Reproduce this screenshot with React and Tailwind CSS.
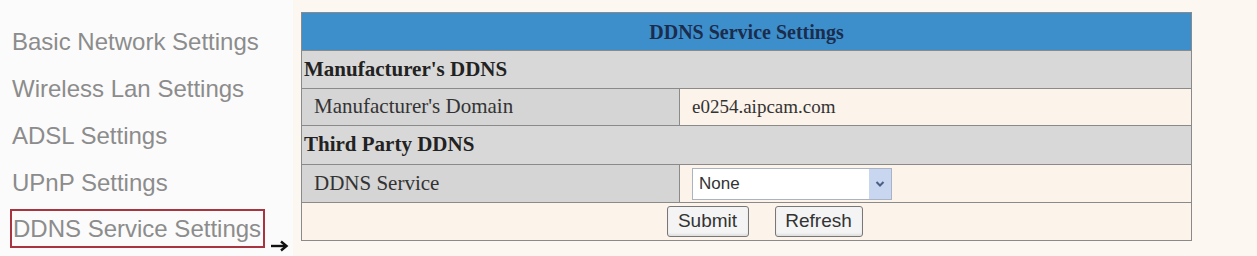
export default function App() {
  const menu = [
    "Basic Network Settings",
    "Wireless Lan Settings",
    "ADSL Settings",
    "UPnP Settings",
  ];

  return (
    <div className="flex w-[1257px] h-[256px] bg-[#fdf7f2] overflow-hidden">
      {/* left menu */}
      <div className="w-[293px] h-full bg-[#fbfbfb] pt-[18px] font-['Liberation_Sans',Arial,sans-serif] text-[24px] text-[#8c8c8c]">
        {menu.map((m) => (
          <div key={m} className="h-[47px] flex items-center pl-[12px]">
            {m}
          </div>
        ))}
        <div className="flex items-end mt-[3px]">
          <div className="ml-[10px] h-[39px] w-[255px] border-2 border-[#a8343f] flex items-center pl-[1px] whitespace-nowrap">
            DDNS Service Settings
          </div>
          <svg className="ml-[5px] -mb-[4px]" width="19" height="12" viewBox="0 0 19 12">
            <path d="M1 6 H15" stroke="#111" strokeWidth="2.4" />
            <path d="M11 1.5 L16.5 6 L11 10.5" fill="none" stroke="#111" strokeWidth="2.4" />
          </svg>
        </div>
      </div>

      {/* content */}
      <div className="flex-1 pt-[12px] pl-[8px]">
        <table className="w-[891px] border-collapse border border-[#8a8a8a] font-['Liberation_Serif','Times_New_Roman',serif] text-[21px] text-[#333]">
          <tbody>
            <tr className="h-[38px] bg-[#3d8fcc]">
              <td colSpan={2} className="text-center font-bold text-[20px] text-[#1b2c4c]">
                DDNS Service Settings
              </td>
            </tr>
            <tr className="h-[38px] bg-[#d8d8d8] border-t border-[#8a8a8a]">
              <td colSpan={2} className="font-bold text-[#222] pl-[2px]">
                Manufacturer's DDNS
              </td>
            </tr>
            <tr className="h-[37px] border-t border-[#8a8a8a]">
              <td className="w-[378px] bg-[#d5d5d5] pl-[12px] border-r border-[#8a8a8a]">
                Manufacturer's Domain
              </td>
              <td className="bg-[#fcf3eb] pl-[12px] text-[19px]">e0254.aipcam.com</td>
            </tr>
            <tr className="h-[39px] bg-[#d8d8d8] border-t border-[#8a8a8a]">
              <td colSpan={2} className="font-bold text-[#222] pl-[2px]">
                Third Party DDNS
              </td>
            </tr>
            <tr className="h-[38px] border-t border-[#8a8a8a]">
              <td className="bg-[#d5d5d5] pl-[12px] border-r border-[#8a8a8a]">
                DDNS Service
              </td>
              <td className="bg-[#fcf3eb] pl-[12px]">
                <div className="w-[200px] h-[32px] border border-[#a9b3c4] bg-white flex items-center font-['Liberation_Sans',Arial,sans-serif] text-[17px] text-[#333]">
                  <span className="flex-1 pl-[6px]">None</span>
                  <span className="w-[22px] h-full bg-[#c8d6ef] flex items-center justify-center">
                    <svg width="10" height="8" viewBox="0 0 10 8">
                      <path d="M1.5 2 L5 5.5 L8.5 2" fill="none" stroke="#4a5f86" strokeWidth="2" />
                    </svg>
                  </span>
                </div>
              </td>
            </tr>
            <tr className="h-[38px] border-t border-[#8a8a8a] bg-[#fcf3eb]">
              <td colSpan={2}>
                <div className="flex justify-center gap-[26px] pl-[36px] font-['Liberation_Sans',Arial,sans-serif] text-[19px] text-[#333]">
                  <button className="h-[31px] w-[82px] border border-[#777] rounded-[3px] bg-[#f4f4f4] shadow-[inset_0_-2px_2px_rgba(0,0,0,0.08)]">
                    Submit
                  </button>
                  <button className="h-[31px] w-[88px] border border-[#777] rounded-[3px] bg-[#f4f4f4] shadow-[inset_0_-2px_2px_rgba(0,0,0,0.08)]">
                    Refresh
                  </button>
                </div>
              </td>
            </tr>
          </tbody>
        </table>
      </div>
    </div>
  );
}
